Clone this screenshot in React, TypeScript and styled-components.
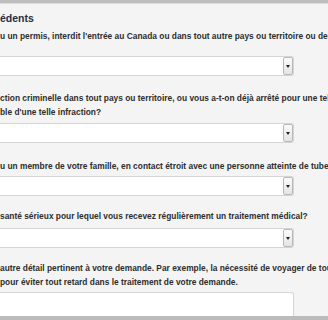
import React from "react";
import styled, { createGlobalStyle } from "styled-components";

const Global = createGlobalStyle`
  html, body { margin: 0; padding: 0; }
  body {
    width: 328px;
    height: 320px;
    overflow: hidden;
    background: #f4f4f4;
    font-family: "Liberation Sans", Arial, sans-serif;
  }
`;

const Page = styled.div`
  width: 328px;
  height: 320px;
  overflow: hidden;
  display: flex;
  flex-direction: column;
  background: #f4f4f4;
`;

const TopBand = styled.div`
  height: 3px;
  flex: none;
  background: #bdbdbd;
  border-bottom: 1px solid #dcdcdc;
`;

const Body = styled.div`
  flex: 1;
  display: flex;
  flex-direction: column;
  width: 460px;
  overflow: hidden;
`;

const BottomBand = styled.div`
  height: 4px;
  flex: none;
  background: #bcbcbc;
`;

const Heading = styled.h2`
  margin: 7px 0 0;
  font-size: 10.5px;
  line-height: 14px;
  font-weight: bold;
  color: #1f2f48;
  white-space: nowrap;
`;

const Question = styled.p<{ $top: number }>`
  margin: ${(p) => p.$top}px 0 0;
  font-size: 8.4px;
  line-height: 14px;
  font-weight: bold;
  color: #2e2e2e;
  white-space: nowrap;
`;

const SelectBox = styled.div<{ $top: number }>`
  margin: ${(p) => p.$top}px 0 0 -4px;
  width: 298px;
  height: 20px;
  box-sizing: border-box;
  background: #fff;
  border: 1px solid #d6d6d6;
  border-radius: 2px;
  display: flex;
  justify-content: flex-end;
  align-items: stretch;
  flex: none;
`;

const ArrowButton = styled.span`
  width: 10px;
  box-sizing: border-box;
  border: 1px solid #b8b8b8;
  border-radius: 2px;
  background: linear-gradient(#fbfbfb, #e4e4e4);
  display: flex;
  align-items: center;
  justify-content: center;
`;

const TextArea = styled.div`
  margin: 3px 0 0 -4px;
  width: 298px;
  flex: 1;
  box-sizing: border-box;
  background: #fff;
  border: 1px solid #d6d6d6;
  border-bottom: none;
  border-radius: 0 3px 0 0;
`;

const Select = ({ top }: { top: number }) => (
  <SelectBox $top={top}>
    <ArrowButton>
      <svg width="4" height="3" viewBox="0 0 4 3">
        <path d="M0 0H4L2 3Z" fill="#222" />
      </svg>
    </ArrowButton>
  </SelectBox>
);

export default function App() {
  return (
    <>
      <Global />
      <Page>
        <TopBand />
        <Body>
          <Heading>édents</Heading>
          <Question $top={4}>
            u un permis, interdit l'entrée au Canada ou dans tout autre pays ou territoire ou demandé l'asile?
          </Question>
          <Select top={13} />
          <Question $top={15}>
            ction criminelle dans tout pays ou territoire, ou vous a-t-on déjà arrêté pour une telle infraction, accusé
            <br />
            ble d'une telle infraction?
          </Question>
          <Select top={4} />
          <Question $top={16}>
            u un membre de votre famille, en contact étroit avec une personne atteinte de tuberculose?
          </Question>
          <Select top={3} />
          <Question $top={13}>
            santé sérieux pour lequel vous recevez régulièrement un traitement médical?
          </Question>
          <Select top={5} />
          <Question $top={13}>
            autre détail pertinent à votre demande. Par exemple, la nécessité de voyager de toute urgence
            <br />
            pour éviter tout retard dans le traitement de votre demande.
          </Question>
          <TextArea />
        </Body>
        <BottomBand />
      </Page>
    </>
  );
}
